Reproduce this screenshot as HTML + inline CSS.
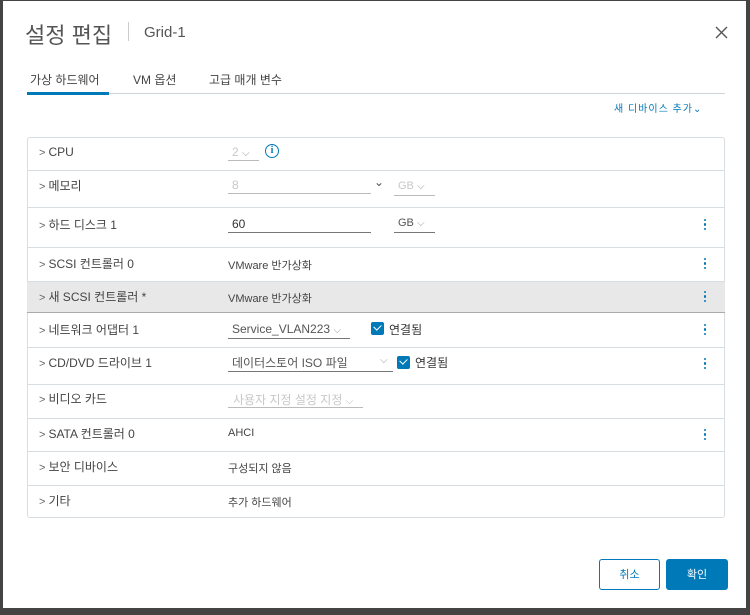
<!DOCTYPE html>
<html><head><meta charset="utf-8"><style>
*{margin:0;padding:0;box-sizing:border-box}
body{width:750px;height:615px;background:#444;position:relative;overflow:hidden;font-family:"Liberation Sans","Noto Sans CJK KR",sans-serif;color:#333}
.dlg{position:absolute;left:3px;top:1px;width:743px;height:607px;background:#fff}
.a{position:absolute;white-space:nowrap}
.row{position:absolute;left:27px;width:698px;border-top:1px solid #d7dde0}
.lbl{position:absolute;left:12px;font-size:12px;color:#444}
.lbl b{font-weight:normal;color:#666;margin-right:3px;font-size:11px}
.val{position:absolute;left:201px;font-size:11px;color:#444}
.dots{position:absolute;left:677px;width:3px}
.dots i{display:block;width:2.4px;height:2.4px;border-radius:50%;background:#0079b8;margin-bottom:2px}
.ul{position:absolute;border-bottom:1px solid #777}
.dis{color:#c8c8c8}
.chk{position:absolute;width:13px;height:13px;background:#0079b8;border-radius:2px}
.chk:after{content:"";position:absolute;left:3px;top:2px;width:6px;height:4px;border-left:1.6px solid #fff;border-bottom:1.6px solid #fff;transform:rotate(-45deg)}
.cv{color:#999;font-size:10px}
</style></head><body>
<div class="dlg"></div>
<div class="a" style="left:25px;top:18px;font-size:22px;color:#555">설정 편집</div>
<div class="a" style="left:128px;top:22px;width:1px;height:19px;background:#ccc"></div>
<div class="a" style="left:144px;top:24px;font-size:15px;color:#555">Grid-1</div>
<svg class="a" style="left:715px;top:26px" width="13" height="13"><path d="M1 1L12 12M12 1L1 12" stroke="#555" stroke-width="1.4"/></svg>
<div class="a" style="left:30px;top:71px;font-size:12px;color:#444">가상 하드웨어</div>
<div class="a" style="left:133px;top:71px;font-size:12px;color:#444">VM 옵션</div>
<div class="a" style="left:209px;top:71px;font-size:12px;color:#444">고급 매개 변수</div>
<div class="a" style="left:27px;top:93px;width:698px;height:1px;background:#ccd5da"></div>
<div class="a" style="left:27px;top:92px;width:82px;height:3px;background:#0079b8"></div>
<div class="a" style="left:614px;top:100px;font-size:10px;color:#0079b8;letter-spacing:1px">새 디바이스 추가⌄</div>

<div class="a" style="left:27px;top:137px;width:698px;height:381px;border:1px solid #d7dde0;border-radius:3px"></div>
<div class="row" style="top:281px;height:32px;background:#e8e8e8;border-bottom:1px solid #aaa"></div>
<div class="row" style="top:170px"></div><div class="row" style="top:207px"></div><div class="row" style="top:247px"></div>
<div class="row" style="top:347px"></div><div class="row" style="top:384px"></div><div class="row" style="top:418px"></div><div class="row" style="top:451px"></div><div class="row" style="top:485px"></div>

<div class="lbl a" style="left:39px;top:145px"><b>&gt;</b>CPU</div>
<div class="lbl a" style="left:39px;top:177px"><b>&gt;</b>메모리</div>
<div class="lbl a" style="left:39px;top:216px"><b>&gt;</b>하드 디스크 1</div>
<div class="lbl a" style="left:39px;top:255px"><b>&gt;</b>SCSI 컨트롤러 0</div>
<div class="lbl a" style="left:39px;top:288px"><b>&gt;</b>새 SCSI 컨트롤러 *</div>
<div class="lbl a" style="left:39px;top:321px"><b>&gt;</b>네트워크 어댑터 1</div>
<div class="lbl a" style="left:39px;top:354px"><b>&gt;</b>CD/DVD 드라이브 1</div>
<div class="lbl a" style="left:39px;top:390px"><b>&gt;</b>비디오 카드</div>
<div class="lbl a" style="left:39px;top:425px"><b>&gt;</b>SATA 컨트롤러 0</div>
<div class="lbl a" style="left:39px;top:458px"><b>&gt;</b>보안 디바이스</div>
<div class="lbl a" style="left:39px;top:492px"><b>&gt;</b>기타</div>

<div class="a dis" style="left:232px;top:145px;font-size:12px">2 <span class="cv">⌵</span></div>
<div class="ul" style="left:228px;top:147px;width:31px;height:14px;border-color:#bbb"></div>
<div class="a" style="left:265px;top:144px;width:14px;height:14px;border:1.5px solid #0079b8;border-radius:50%;color:#0079b8;font-size:10px;font-weight:bold;text-align:center;line-height:11px;font-family:'Liberation Serif',serif">i</div>

<div class="a dis" style="left:232px;top:178px;font-size:12px">8</div>
<div class="ul" style="left:228px;top:180px;width:143px;height:14px;border-color:#bbb"></div>
<div class="a" style="left:374px;top:175px;font-size:12px;color:#555">⌄</div>
<div class="a dis" style="left:398px;top:180px;font-size:11px">GB <span class="cv">⌵</span></div>
<div class="ul" style="left:394px;top:182px;width:41px;height:14px;border-color:#bbb"></div>

<div class="a" style="left:232px;top:217px;font-size:12px">60</div>
<div class="ul" style="left:228px;top:219px;width:143px;height:14px"></div>
<div class="a" style="left:398px;top:217px;font-size:11px;color:#555">GB <span class="cv">⌵</span></div>
<div class="ul" style="left:394px;top:219px;width:41px;height:14px"></div>

<div class="val a" style="left:228px;top:257px">VMware 반가상화</div>
<div class="val a" style="left:228px;top:290px">VMware 반가상화</div>
<div class="a" style="left:232px;top:322px;font-size:12px;color:#555">Service_VLAN223 <span class="cv">⌵</span></div>
<div class="ul" style="left:228px;top:324px;width:122px;height:15px"></div>
<div class="chk" style="left:371px;top:322px"></div>
<div class="a" style="left:389px;top:321px;font-size:12px">연결됨</div>
<div class="a" style="left:232px;top:354px;font-size:12px;color:#555">데이터스토어 ISO 파일</div>
<div class="a cv" style="left:380px;top:355px">⌵</div>
<div class="ul" style="left:228px;top:356px;width:165px;height:16px"></div>
<div class="chk" style="left:397px;top:356px"></div>
<div class="a" style="left:415px;top:354px;font-size:12px">연결됨</div>
<div class="a dis" style="left:233px;top:391px;font-size:12px">사용자 지정 설정 지정 <span class="cv" style="color:#bbb">⌵</span></div>
<div class="ul" style="left:228px;top:393px;width:135px;height:15px;border-color:#bbb"></div>
<div class="val a" style="left:228px;top:427px">AHCI</div>
<div class="val a" style="left:228px;top:460px">구성되지 않음</div>
<div class="val a" style="left:228px;top:494px">추가 하드웨어</div>

<div class="dots a" style="left:704px;top:219px"><i></i><i></i><i></i></div>
<div class="dots a" style="left:704px;top:258px"><i></i><i></i><i></i></div>
<div class="dots a" style="left:704px;top:291px"><i></i><i></i><i></i></div>
<div class="dots a" style="left:704px;top:324px"><i></i><i></i><i></i></div>
<div class="dots a" style="left:704px;top:358px"><i></i><i></i><i></i></div>
<div class="dots a" style="left:704px;top:429px"><i></i><i></i><i></i></div>

<div class="a" style="left:599px;top:559px;width:61px;height:31px;border:1px solid #0079b8;border-radius:3px;color:#0079b8;font-size:11px;text-align:center;line-height:31px">취소</div>
<div class="a" style="left:666px;top:559px;width:62px;height:31px;background:#0079b8;border-radius:3px;color:#fff;font-size:11px;text-align:center;line-height:33px">확인</div>
</body></html>
